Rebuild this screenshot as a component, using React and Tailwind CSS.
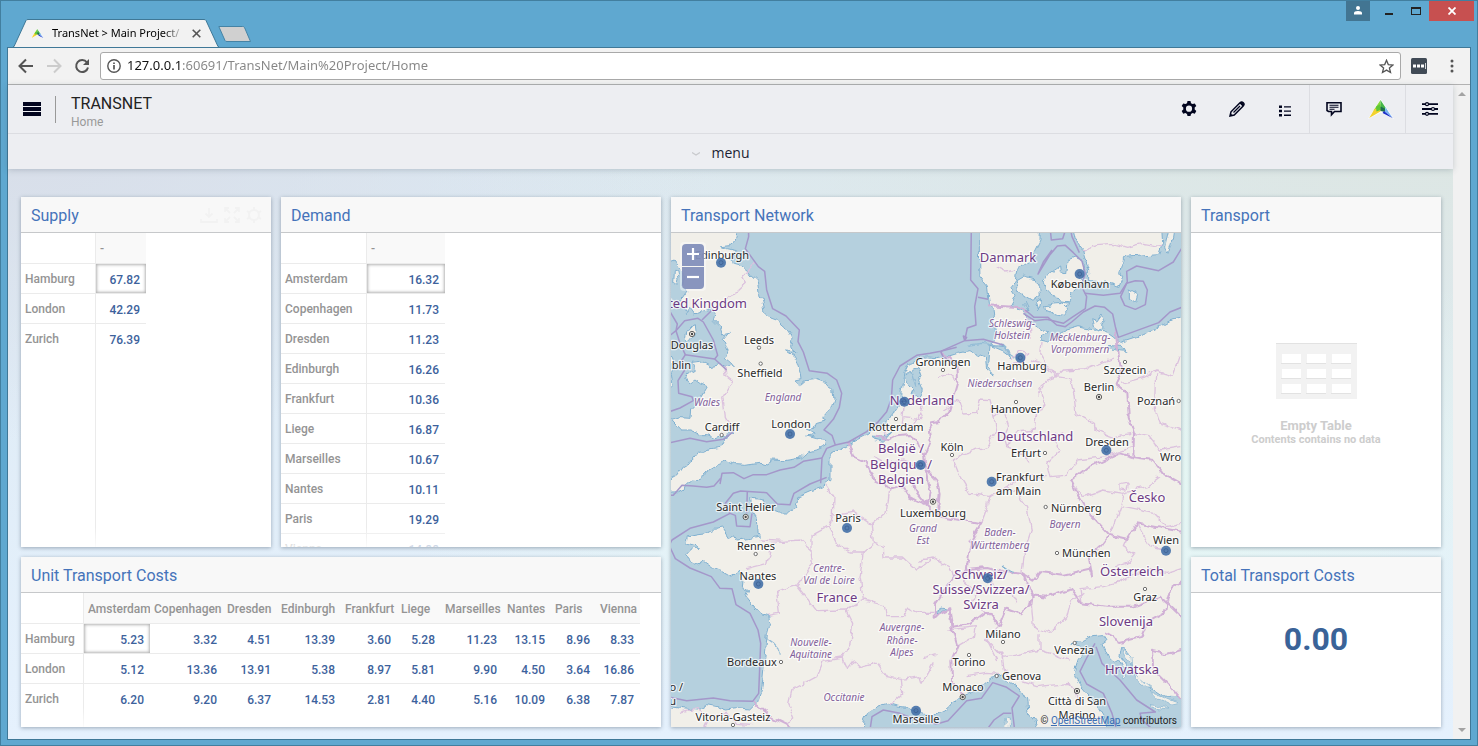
import clsx from 'clsx'

/* Transport dashboard inside a browser window. Panels sit on a 4 column grid,
 * the map is drawn at three units per pixel (see GEO_SCALE). */

const SUPPLY = [
  ['Hamburg', '67.82'],
  ['London', '42.29'],
  ['Zurich', '76.39'],
]

const DEMAND = [
  ['Amsterdam', '16.32'],
  ['Copenhagen', '11.73'],
  ['Dresden', '11.23'],
  ['Edinburgh', '16.26'],
  ['Frankfurt', '10.36'],
  ['Liege', '16.87'],
  ['Marseilles', '10.67'],
  ['Nantes', '10.11'],
  ['Paris', '19.29'],
  ['Vienna', '14.88'],
]

const COST_COLUMNS = [
  ['Amsterdam', 'w-[66px]'],
  ['Copenhagen', 'w-[73px]'],
  ['Dresden', 'w-[54px]'],
  ['Edinburgh', 'w-[64px]'],
  ['Frankfurt', 'w-[56px]'],
  ['Liege', 'w-[44px]'],
  ['Marseilles', 'w-[62px]'],
  ['Nantes', 'w-[48px]'],
  ['Paris', 'w-[45px]'],
  ['Vienna', 'w-[44px]'],
]

const COSTS = [
  ['Hamburg', '5.23', '3.32', '4.51', '13.39', '3.60', '5.28', '11.23', '13.15', '8.96', '8.33'],
  ['London', '5.12', '13.36', '13.91', '5.38', '8.97', '5.81', '9.90', '4.50', '3.64', '16.86'],
  ['Zurich', '6.20', '9.20', '6.37', '14.53', '2.81', '4.40', '5.16', '10.09', '6.38', '7.87'],
]

/* ---------- map data ---------- */

const GEO_SCALE = 'translate(-1 -3) scale(0.33333)'

const LAND = [
  // Great Britain
  'M-20 -20 L205 -20 205 9 198 30 180 44 150 48 172 56 200 62 186 78 178 88 196 100 215 105 232 118 240 135 262 155 268 190 278 225 282 245 300 262 322 270 345 290 360 312 366 330 362 345 378 372 368 362 346 360 372 378 384 400 394 430 396 446 372 450 390 465 405 452 440 448 470 458 488 478 492 505 482 535 458 562 470 570 440 578 432 598 408 600 436 612 410 618 440 626 470 628 466 648 440 660 410 668 390 685 345 692 300 690 288 705 270 700 230 706 200 704 170 690 148 700 130 715 102 732 88 752 70 750 50 760 45 775 20 785 -20 790 -20 760 20 738 40 708 70 690 90 664 120 660 150 655 160 634 190 608 160 618 135 626 110 614 90 614 60 600 35 600 12 576 5 568 30 560 60 562 62 540 88 512 112 470 92 462 75 450 60 460 46 440 76 424 66 400 96 396 122 410 150 404 165 412 192 408 178 395 162 385 174 362 162 330 178 310 155 315 148 290 130 272 136 246 128 236 100 242 76 252 62 232 50 250 34 240 28 215 48 186 38 172 42 140 26 112 10 90 -20 100 Z',
  'M10 128 L20 126 24 145 20 160 8 158 Z',
  // Isle of Man, Ireland
  'M76 284 L64 290 50 305 46 325 58 332 70 316 78 300 Z',
  'M-20 370 L6 380 14 400 4 430 8 470 -20 500 Z',
  // Funen, Zealand, Lolland and the smaller Danish islands
  'M1038 152 L1062 138 1092 146 1106 170 1108 196 1086 214 1060 198 1046 178 Z',
  'M1120 150 L1140 130 1172 108 1174 126 1190 132 1194 90 1216 80 1236 90 1242 120 1232 160 1206 190 1196 216 1160 210 1144 188 1130 176 Z',
  'M1124 228 L1150 222 1184 220 1198 236 1180 256 1150 250 1126 240 Z',
  'M1096 216 L1112 206 1104 240 Z',
  'M1176 216 L1196 220 1190 230 Z',
  'M1080 240 L1064 222 1068 216 Z',
  // Sweden, Oland, Bornholm
  'M1205 -20 L1216 30 1236 56 1246 90 1256 120 1256 156 1300 158 1345 172 1358 140 1352 124 1364 82 1412 78 1466 74 1478 40 1474 -20 Z',
  'M1500 -20 L1515 -20 1508 24 1494 70 1484 54 Z',
  'M1378 180 L1406 196 1400 216 1378 202 Z',
  // Rugen
  'M1262 266 L1280 274 1296 252 1304 268 1296 284 1308 296 1284 300 1268 290 Z',
  // Mainland
  'M928 -20 L928 60 930 140 952 168 958 220 972 236 974 258 960 276 982 300 978 326 955 345 1005 350 1022 380 998 362 960 346 956 408 975 438 950 420 946 384 920 374 900 362 860 370 828 380 800 386 770 384 740 388 715 404 702 430 694 480 690 520 662 566 630 592 600 606 594 612 540 640 480 672 480 754 456 772 420 782 388 796 374 820 384 834 360 846 326 846 290 832 278 806 242 802 246 840 262 862 264 912 272 918 236 926 200 930 190 914 176 922 158 894 130 898 102 912 84 914 52 920 48 942 78 950 90 958 66 958 50 976 62 992 88 1008 96 990 124 1010 156 1022 184 1038 204 1024 216 1050 214 1072 236 1082 228 1102 250 1130 276 1152 296 1156 300 1180 292 1210 290 1232 286 1272 282 1312 276 1370 262 1420 242 1440 200 1436 166 1440 140 1430 110 1424 80 1440 40 1436 -20 1426 -20 1520 1560 1520 1560 258 1500 272 1450 300 1412 318 1350 338 1330 318 1312 306 1268 300 1224 290 1190 300 1160 316 1136 336 1112 330 1130 306 1100 288 1074 274 1060 240 1020 226 1036 194 1020 170 1036 150 1040 126 1058 108 1080 94 1092 66 1110 30 1112 -20 Z',
]

const WATER = [
  // Mediterranean
  'M578 1520 L582 1470 592 1448 624 1428 652 1420 680 1428 716 1432 744 1448 784 1458 822 1440 850 1415 878 1400 910 1390 940 1362 965 1342 990 1336 1015 1354 1050 1376 1070 1410 1074 1448 1094 1474 1112 1520 Z',
  // Adriatic
  'M1222 1290 L1210 1326 1226 1362 1250 1390 1278 1424 1304 1466 1320 1520 1560 1520 1560 1430 1520 1400 1480 1398 1440 1372 1410 1350 1390 1320 1380 1270 1356 1250 1350 1280 1372 1310 1358 1314 1346 1290 1332 1298 1314 1280 1296 1240 1308 1232 1296 1214 1262 1218 1228 1236 1200 1244 1222 1252 1252 1262 Z',
  // IJsselmeer, Scheldt
  'M702 440 L726 420 746 412 756 440 748 452 760 480 748 500 726 494 732 480 716 464 Z',
  'M604 618 L640 622 668 604 640 634 610 628 Z',
  // Szczecin lagoon
  'M1320 346 L1360 350 1368 364 1350 362 1330 358 Z',
  // Lakes Geneva and Constance
  'M796 1148 L816 1134 840 1140 820 1142 802 1152 Z',
  'M996 1008 L1020 1024 1036 1028 1030 1034 1008 1022 Z',
]

const ISLETS = [
  'M1010 1468 L1018 1470 1018 1500 1006 1500 Z',
  'M1356 1252 L1386 1284 1388 1302 1370 1290 Z',
  'M1392 1330 L1420 1352 1446 1372 1426 1370 1400 1348 Z',
  'M1440 1384 L1480 1402 1520 1418 1500 1422 1460 1404 Z',
  'M1350 1322 L1366 1336 1360 1346 Z',
  'M1440 1424 L1490 1432 1500 1440 1450 1434 Z',
]

const RIVERS = [
  'M892 346 L930 340 1000 346 1022 372 1046 388',
  'M292 1226 L312 1240 324 1254 328 1274',
  'M690 480 L706 432 722 420 M722 420 L738 470',
]

const SEA_BORDERS = [
  'M235 -10 L236 20 226 56 265 110 284 124 290 180 308 236 348 258 388 300 384 335 400 366 418 422 472 430 500 450 515 490 508 532 490 568 462 600 486 616 496 645 470 655 456 684 452 760',
  'M150 762 L156 730 190 728 222 746 250 734 290 734 330 720 372 712 400 694 456 684',
  'M496 645 L536 636 590 605 622 578 650 545 664 506 668 450 690 408 740 376 780 370 812 364 860 352',
  'M904 -10 L902 150 924 176 914 230 918 285 892 294 884 332 M924 202 L954 208',
  'M812 364 L884 332 890 322 880 318 884 332 940 328 1000 345 M812 364 L820 382 860 402',
  'M1066 240 L1092 262 1134 262 1160 285 1186 290 1205 276 1240 246 1275 228 1304 232 1328 252 1336 290 1345 322 1400 302 1466 278 1500 246 1560 222',
  'M1060 250 L1094 272 1130 268 1180 280 1206 262 1246 236 1250 200 1234 168 1246 130 1236 94 1210 68 1186 46 1162 48 1140 74 1104 132 1120 96 1146 60',
  'M1244 190 L1300 196 1350 190 1372 156 1370 124 1400 108 1466 122 1510 96 1550 30',
  'M1370 160 L1396 152 1420 154 1432 180 1426 224 1396 238 1364 226 1352 200 Z',
  'M1140 -10 L1144 30 1178 26 1190 -10 M1200 -10 L1206 20 1228 68',
  'M-10 324 L18 302 22 282 -10 228 M18 302 L44 272 84 265 100 276 130 330 143 376 134 387 88 380 46 374 36 390 44 420 24 452 26 490 66 500 70 512 30 534 -10 548',
  'M18 302 L30 340 46 374 M96 270 L130 236 M134 387 L170 420',
  'M-10 640 L60 625 110 635 160 628 190 605',
  'M-10 795 L10 796 36 766 70 768 110 772 132 768 152 745',
  'M-10 960 L6 930 60 895 130 876 180 850 166 820 190 790 212 783 290 788 322 822 360 824 372 790 420 762 470 742',
  'M180 850 L196 856 200 888 240 890 246 850 M232 783 L230 850',
  'M-10 930 L4 960 16 986 60 1014 124 1040 150 1075 186 1076 198 1124 240 1150 264 1200 272 1240 266 1390 248 1414 180 1412 130 1404 50 1412 -10 1400',
  'M600 1500 L606 1460 640 1440 690 1450 740 1470 800 1482 834 1472 890 1412 934 1405 968 1358 1010 1372 1048 1398 1026 1434 1034 1500 M950 1500 L972 1470 1000 1450 1024 1450',
  'M1275 1240 L1250 1284 1230 1324 1250 1362 1300 1390 1326 1450 1340 1500',
  'M1278 1250 L1296 1300 1350 1350 1400 1410 1456 1446 1410 1450 1416 1470 1450 1500',
]

const NATIONAL = [
  'M536 636 L550 682 590 700 612 752 660 775 698 768 720 800 742 812 770 824 800 855 935 880 902 936 890 1020 852 1040 796 1120 794 1160 840 1138 844 1190 862 1250 844 1290 846 1350 878 1400',
  'M812 364 L862 402 864 450 838 540 812 576 780 580 786 620 762 680 770 720 796 748 806 790 800 855',
  'M612 620 L660 628 682 616 720 612 744 634 762 680 M728 752 L742 790 770 824 780 780 770 720',
  'M888 1020 L952 1014 1010 1030 1060 1034 1090 1052 1110 1026 1180 1034 1258 1016 1266 1034 1256 980 1290 950 1318 914 1370 926 1400 880 1534 905',
  'M1318 914 L1250 840 1220 790 1204 752 1250 716 1350 670 1390 682 1450 690 1480 730 1534 760',
  'M1334 290 L1350 400 1356 430 1340 464 1372 490 1376 560 1392 610 1390 682',
  'M794 1160 L840 1134 850 1190 900 1182 950 1144 988 1188 1010 1136 1048 1150 1084 1122 1088 1092 1060 1034',
  'M1084 1096 L1130 1100 1200 1075 1236 1120 1310 1130 1390 1130 1470 1100 1490 1118 1500 1080 1534 1054 M1490 1118 L1534 1160',
  'M1304 1210 L1350 1236 1414 1220 1430 1180 1484 1150 1490 1118',
  'M1534 1412 L1500 1370 1450 1320 1446 1262 1490 1272 1534 1260',
  'M248 1414 L300 1460 350 1484 372 1500',
  'M954 226 L1060 232 1074 246',
]

const REGIONAL = [
  'M255 98 L215 140 226 160 172 210',
  'M165 412 L168 436 186 450 158 500 166 560 190 602',
  'M272 930 L340 934 390 930 426 960 430 1000 380 1066 320 1084 328 1150 296 1156 M228 1016 L290 1000 300 960',
  'M470 768 L492 800 490 852 474 890 426 916 426 960 M474 890 L500 940 540 966 580 966 606 944 M480 860 L550 846 604 884 610 940 640 950 642 984 700 984 740 1020 784 990',
  'M660 775 L648 850 606 884 M580 966 L570 1040 580 1110 528 1140 440 1142 380 1066',
  'M580 1110 L640 1126 646 1160 700 1160 716 1134 750 1150 790 1150 M528 1140 L548 1180 540 1240 516 1284 460 1294 440 1340 366 1380 356 1420 372 1460 350 1484',
  'M516 1284 L530 1316 550 1290 570 1310 620 1296 650 1340 694 1348 698 1390 660 1424 M694 1348 L750 1340 756 1360 790 1300',
  'M750 990 L790 984 840 1014 852 1040 M760 1286 L800 1274',
  'M804 440 L830 430 858 446 M700 520 L694 580 726 590 748 550 756 566 700 560 M748 550 L756 510 780 500 M640 592 L650 620 M612 680 L650 700 700 690 730 700',
  'M870 740 L850 690 880 670 950 650 980 600 972 560 960 512 930 510 920 550 880 552 870 510 820 540',
  'M972 560 L1000 540 1016 590 1002 620 1010 650 1060 670 1080 700 M1108 470 L1130 450 1160 440 1200 446 1212 490 1218 550 1270 580 1272 600',
  'M1108 470 L1126 520 1100 560 1096 600 1040 606 1010 650 M1116 336 L1112 370 1136 410 1160 440 1110 400 1080 390',
  'M1160 440 L1180 420 1250 416 1330 384 M1180 608 L1150 620 1170 660 1130 700 1140 740 1190 736 1220 690 1310 680 1392 650',
  'M1272 596 L1330 620 1384 610 M1022 386 L1050 364 1070 370 1060 400 1026 402',
  'M1356 460 L1430 440 1456 420 1510 436 1530 380 M1460 430 L1456 540 1470 580 1534 600 M1392 610 L1440 620 1470 660 1534 650',
  'M870 740 L900 790 960 800 1010 770 1040 790 1070 830 1084 900 1064 960 1056 1030 M960 800 L946 850 935 880 M1010 770 L1060 740 1130 740',
  'M1070 250 L1084 330 M1100 500 L1120 466 M1200 752 L1240 800 1300 780 1360 790 1350 830 1320 914 M1360 790 L1430 770 1470 740 M1350 830 L1450 850 1490 890 1534 880',
  'M1370 926 L1360 950 1394 970 1370 1000 1340 1010 1380 1040 1440 1016 1490 1030 1534 1016 M1236 1120 L1230 1076 1300 1070 1340 1060 1380 1040 M1400 880 L1440 950 1480 960',
  'M1084 1122 L1090 1190 1140 1210 1190 1160 1200 1120 1240 1090 M1110 1210 L1110 1260 1000 1282 950 1230 984 1190 M1110 1260 L1200 1290 M1000 1282 L1010 1340 1100 1370 1200 1360 1230 1420',
  'M838 1200 L916 1190 910 1220 860 1250 M950 1230 L980 1290 M890 1340 L950 1330 990 1334 M880 1050 L920 1090 900 1130 950 1144 M960 1040 L980 1090 1020 1080 1040 1120',
  'M1236 60 L1280 44 1330 40 1370 52 1420 40 1474 50 M980 110 L1010 126 1034 120',
  'M30 1450 L80 1436 120 1460 170 1450 200 1480 250 1484 M120 1460 L100 1500',
  'M1350 760 L1372 756 1368 780 1350 776 Z',
]

const PINS = [
  [153, 98], [360, 612], [703, 515], [752, 705], [1229, 132], [1051, 383], [1309, 661],
  [965, 755], [953, 1045], [1488, 962], [531, 894], [265, 1062], [738, 1442],
]

const TOWNS = [
  [267, 353], [272, 401], [155, 615], [678, 567], [819, 420], [1038, 516], [1125, 669],
  [846, 675], [1365, 396], [1526, 513], [1127, 831], [1161, 969], [1425, 1077], [999, 1236],
  [897, 1275], [980, 1338], [1214, 1239], [257, 972], [333, 1296], [189, 1485],
]

const CAPITALS = [
  [66, 312], [1287, 501], [789, 815], [1221, 1383], [878, 1401], [227, 861],
]

// name, x, baseline, anchor
const CITY_LABELS = [
  ['Edinburgh', 51, 26], ['Leeds', 88, 111], ['Sheffield', 89, 144], ['London', 120, 195],
  ['Cardiff', 51, 198], ['Douglas', 21, 116], ['Dublin', 20, 136, 'end'], ['Rotterdam', 225, 198],
  ['Groningen', 272, 133], ['København', 409, 55], ['Hamburg', 351, 137], ['Szczecin', 454, 141],
  ['Berlin', 428, 158], ['Poznań', 466, 172, 'start'], ['Hannover', 345, 180], ['Dresden', 436, 213],
  ['Köln', 281, 218], ['Erfurt', 355, 224], ['Wrocław', 489, 228, 'start'],
  ['Frankfurt', 325, 248, 'start'], ['am Main', 325, 262, 'start'], ['Nürnberg', 380, 279, 'start'],
  ['Luxembourg', 262, 284], ['München', 391, 324, 'start'], ['Wien', 495, 311], ['Graz', 474, 368],
  ['Milano', 332, 405], ['Torino', 298, 433], ['Genova', 331, 447, 'start'], ['Monaco', 292, 458],
  ['Venezia', 403, 421], ['Città di San', 406, 472], ['Marino', 406, 486], ['Marseille', 245, 490],
  ['Saint Helier', 75, 278], ['Rennes', 85, 317], ['Nantes', 87, 347], ['Paris', 177, 289],
  ['Bordeaux', 81, 433], ['Vitoria-Gasteiz', 62, 488], ['Bilbao /', 12, 458, 'end'], ['Bilbou', 5, 472, 'end'],
]

const COUNTRY_LABELS = [
  ['United Kingdom', 76, 75, 'end'], ['Nederland', 251, 172], ['België /', 230, 220], ['Belgique /', 230, 236],
  ['Belgien', 230, 251], ['Danmark', 337, 29], ['Deutschland', 364, 208], ['Česko', 476, 269],
  ['Österreich', 461, 343], ['Schweiz/', 310, 346], ['Suisse/Svizzera/', 310, 361], ['Svizra', 310, 376],
  ['Slovenija', 455, 393], ['Hrvatska', 461, 441], ['France', 166, 369],
]

const REGION_LABELS = [
  ['Wales', 36, 173], ['England', 112, 168], ['Schleswig-', 341, 94], ['Holstein', 341, 106],
  ['Mecklenburg-', 409, 108], ['Vorpommern', 409, 120], ['Niedersachsen', 329, 154], ['Bayern', 394, 295],
  ['Grand', 252, 299], ['Est', 252, 311], ['Baden-', 329, 303], ['Württemberg', 329, 316],
  ['Centre-', 158, 339], ['Val de Loire', 158, 351], ['Auvergne-', 231, 398], ['Rhône-', 231, 411],
  ['Alpes', 231, 423], ['Nouvelle-', 140, 413], ['Aquitaine', 140, 425], ['Occitanie', 173, 468],
]

function Labels({ items, className }) {
  return (
    <g className={className} stroke="#fff" strokeOpacity="0.7" strokeWidth="2.5" strokeLinejoin="round" paintOrder="stroke">
      {items.map(([name, x, y, anchor = 'middle']) => (
        <text key={name + y} x={x} y={y} textAnchor={anchor}>
          {name}
        </text>
      ))}
    </g>
  )
}

function NetworkMap() {
  return (
    <div className="relative min-h-0 flex-1 overflow-hidden bg-[#b5d0de]">
      <svg
        className="absolute inset-0 h-full w-full"
        viewBox="0 0 510 494"
        preserveAspectRatio="xMinYMin slice"
        role="img"
        aria-label="Transport network"
      >
        <defs>
          <filter id="rough" x="-5%" y="-5%" width="110%" height="110%" colorInterpolationFilters="sRGB">
            <feTurbulence type="fractalNoise" baseFrequency="0.11" numOctaves="2" seed="4" />
            <feDisplacementMap in="SourceGraphic" scale="7" xChannelSelector="R" yChannelSelector="G" />
          </filter>
        </defs>
        <g filter="url(#rough)">
          <g transform={GEO_SCALE} strokeLinejoin="round">
            <g fill="#f1efe9" stroke="#7fb0d0" strokeWidth="3">
              {LAND.map((d) => <path key={d} d={d} />)}
            </g>
            <g fill="#b5d0de" stroke="#7fb0d0" strokeWidth="3">
              {WATER.map((d) => <path key={d} d={d} />)}
            </g>
            <g fill="#f1efe9" stroke="#7fb0d0" strokeWidth="2">
              {ISLETS.map((d) => <path key={d} d={d} />)}
            </g>
            <g fill="none" stroke="#94bcd6" strokeWidth="4">
              {RIVERS.map((d) => <path key={d} d={d} />)}
            </g>
            <g fill="none" stroke="#dcc2de" strokeWidth="4">
              {REGIONAL.map((d) => <path key={d} d={d} />)}
            </g>
            <g fill="none" stroke="#d0b0d6" strokeWidth="6">
              {NATIONAL.map((d) => <path key={d} d={d} />)}
            </g>
          </g>
        </g>
        <g transform={GEO_SCALE}>
          <g fill="none" stroke="#a497ca" strokeWidth="4.5" strokeLinejoin="round">
            {SEA_BORDERS.map((d) => <path key={d} d={d} />)}
          </g>
          <g fill="#fff" stroke="#555" strokeWidth="2.5">
            {TOWNS.map(([x, y]) => <circle key={`${x}-${y}`} cx={x} cy={y} r="5" />)}
          </g>
          {CAPITALS.map(([x, y]) => (
            <g key={`${x}-${y}`}>
              <circle cx={x} cy={y} r="8" fill="#f1efe9" stroke="#444" strokeWidth="2.5" />
              <circle cx={x} cy={y} r="3.5" fill="#444" />
            </g>
          ))}
        </g>
        <Labels items={REGION_LABELS} className="fill-[#83619a] font-['Noto_Sans',sans-serif] text-[10px] italic" />
        <Labels items={COUNTRY_LABELS} className="fill-[#6d3a84] font-['Noto_Sans',sans-serif] text-[13px]" />
        <Labels items={CITY_LABELS} className="fill-[#2a2a2a] font-['Noto_Sans',sans-serif] text-[11px]" />
        <g transform={GEO_SCALE}>
          {PINS.map(([x, y]) => (
            <g key={`${x}-${y}`} fillOpacity="0.9">
              <circle cx={x} cy={y} r="15" fill="#4470a8" />
              <circle cx={x} cy={y} r="6" fill="none" stroke="#3a5c8e" strokeWidth="2" />
            </g>
          ))}
        </g>
      </svg>

      <div className="absolute left-[9px] top-[9px] flex flex-col gap-px rounded bg-white/40 p-[2px]">
        <ZoomButton label="Zoom in" className="rounded-t-sm">
          <path d="M5 10h12M11 4v12" />
        </ZoomButton>
        <ZoomButton label="Zoom out" className="rounded-b-sm">
          <path d="M5 10h12" />
        </ZoomButton>
      </div>

      <p className="absolute bottom-0 right-1 font-[Roboto,sans-serif] text-[10px] leading-3 text-[#222]">
        © <a href="#osm" className="text-[#3c6eb4] underline">OpenStreetMap</a> contributors
      </p>
    </div>
  )
}

function ZoomButton({ label, className, children }) {
  return (
    <button type="button" aria-label={label} className={clsx('h-[22px] w-[22px] bg-[#7d8bb8]/90', className)}>
      <svg viewBox="0 0 22 22" fill="none" stroke="#fff" strokeWidth="2.2" className="h-full w-full">{children}</svg>
    </button>
  )
}

/* ---------- window chrome ---------- */

function Logo({ className }) {
  return (
    <svg viewBox="0 0 26 20" className={className} aria-hidden="true">
      <path d="M12.5 0 L26 20 12.5 13.5 0 20 Z" fill="#fff" />
      <path d="M12.5 1 L5.5 11.500 12.5 11.500 Z" fill="#86d93c" />
      <path d="M12.5 1 L19.500 11.500 12.5 11.500 Z" fill="#45b548" />
      <path d="M6.500 10 L12.5 9 12.5 12.500 1.200 19 Z" fill="#f3d22e" />
      <path d="M8 7.800 L12.5 5 12.5 11 8.500 12.500 Z" fill="#5fc636" />
      <path d="M12.5 7.500 L18 10 17 13 12.500 12 Z" fill="#1f6f4c" />
      <path d="M17 7.800 L20.500 13 17 12.500 Z" fill="#9ad6f5" />
      <path d="M18 9.500 L24.800 19 16.500 12.500 Z" fill="#7ab2f2" />
      <path d="M16 12 L24.800 19.200 14.500 14 Z" fill="#1b2ec8" />
    </svg>
  )
}

function TitleBar() {
  return (
    <div className="flex h-[46px] items-start justify-between">
      <div className="flex self-end pl-[6px]">
        <div className="relative flex h-[28px] w-[206px] items-center pl-[18px]">
          <svg viewBox="0 0 206 28" preserveAspectRatio="none" className="absolute inset-0 h-full w-full" aria-hidden="true">
            <path d="M0 28 L1 27.5 13 1.5 Q13.5 .5 15 .5 H191 Q192.500 .5 193 1.500 L205 27.5 206 28 Z" fill="#f2f2f2" stroke="#3f7897" />
            <path d="M1.500 28 H204.500" stroke="#f2f2f2" strokeWidth="2" />
          </svg>
          <Logo className="relative h-[11px] w-[13px]" />
          <span className="relative ml-2 w-[132px] overflow-hidden whitespace-nowrap font-['Noto_Sans',sans-serif] text-[11px] leading-4 mask-r-from-85% mask-r-to-100%">
            TransNet &gt; Main Project/
          </span>
          <button type="button" aria-label="Close tab" className="relative ml-2">
            <svg viewBox="0 0 9 9" className="h-[9px] w-[9px]" stroke="#555" strokeWidth="1.6"><path d="M.7.7 8.300 8.300M8.300.7.7 8.300" /></svg>
          </button>
        </div>
        <button type="button" aria-label="New tab" className="-ml-px mt-[6px] h-[18px]">
          <svg viewBox="0 0 34 18" className="h-[18px] w-[34px]"><path d="M.8 1.500 H24.500 Q26 1.500 26.500 2.500 L32.500 16.500 H9 Q7.500 16.500 7 15.500 Z" fill="#d0d0d0" stroke="#4583a5" /></svg>
        </button>
      </div>

      <div className="-mr-[3px] flex">
        <button type="button" aria-label="Profile" className="flex h-5 w-6 items-center justify-center bg-[#427592]">
          <svg viewBox="0 0 8 9" className="mb-[2px] h-[9px] w-[8px]" fill="#fff"><circle cx="4" cy="2" r="2" /><path d="M0 8.500V7Q0 5 4 5T8 7V8.500Z" /></svg>
        </button>
        <button type="button" aria-label="Minimize" className="ml-[5px] flex h-5 w-[27px] items-end justify-center pb-[6px]">
          <span className="h-[2px] w-2 bg-[#222]" />
        </button>
        <button type="button" aria-label="Maximize" className="flex h-5 w-[27px] items-center justify-center">
          <span className="h-2 w-[10px] border border-t-2 border-[#222]" />
        </button>
        <button type="button" aria-label="Close" className="flex h-5 w-[45px] items-center justify-center bg-[#c75050]">
          <svg viewBox="0 0 8 8" className="h-2 w-2" stroke="#fff" strokeWidth="1.8"><path d="M.5.5 7.500 7.500M7.500.5.5 7.500" /></svg>
        </button>
      </div>
    </div>
  )
}

function AddressBar() {
  return (
    <div className="flex h-[37px] shrink-0 items-center border-b border-[#b2b2b2] bg-[#f2f2f2] pl-[10px] pr-4">
      <button type="button" aria-label="Back">
        <svg viewBox="0 0 16 16" className="h-4 w-4" fill="none" stroke="#555" strokeWidth="2"><path d="M15 8H2M8 1.500 1.500 8 8 14.500" /></svg>
      </button>
      <button type="button" aria-label="Forward" className="ml-3">
        <svg viewBox="0 0 16 16" className="h-4 w-4" fill="none" stroke="#ccc" strokeWidth="2"><path d="M1 8H14M8 1.500 14.500 8 8 14.500" /></svg>
      </button>
      <button type="button" aria-label="Reload" className="ml-3">
        <svg viewBox="0 0 16 16" className="h-4 w-4" fill="none" stroke="#555" strokeWidth="2"><path d="M13 4.500A6 6 0 1 0 14 9.500" /><path d="M15 1V7H9Z" fill="#555" stroke="none" /></svg>
      </button>
      <div className="ml-[10px] flex h-7 min-w-0 flex-1 items-center rounded-[3px] border border-[#a9a9a9] bg-white px-[6px]">
        <svg viewBox="0 0 14 14" className="h-[14px] w-[14px]" fill="none" stroke="#555" strokeWidth="1.400" aria-hidden="true">
          <circle cx="7" cy="7" r="6.200" /><path d="M7 6V10.500M7 3.500V5" strokeWidth="1.700" />
        </svg>
        <input
          aria-label="Address"
          defaultValue="127.0.0.1:60691/TransNet/Main%20Project/Home"
          className="ml-[6px] min-w-0 flex-1 bg-[linear-gradient(90deg,#111_54px,#858585_54px)] bg-clip-text font-['Noto_Sans',sans-serif] text-[13px] text-transparent outline-none"
        />
        <button type="button" aria-label="Bookmark">
          <svg viewBox="0 0 15 15" className="h-[15px] w-[15px]" fill="none" stroke="#555" strokeWidth="1.300"><path d="M7.500 1.300 9.300 5.600 13.900 6 10.400 9 11.500 13.500 7.500 11.100 3.500 13.500 4.600 9 1.100 6 5.700 5.600Z" /></svg>
        </button>
      </div>
      <button type="button" aria-label="Extension" className="ml-[10px]">
        <svg viewBox="0 0 16 16" className="h-4 w-4"><rect width="16" height="16" rx="1.500" fill="#414b56" /><path d="M2 6.500h3v3h-3zM6 6.500h3v3h-3zM10 6.500h3v3h-3zM14 5h.8v6h-.8z" fill="#fff" /></svg>
      </button>
      <button type="button" aria-label="Browser menu" className="ml-[23px]">
        <svg viewBox="0 0 4 14" className="h-[14px] w-1" fill="#555"><circle cx="2" cy="2" r="1.500" /><circle cx="2" cy="7" r="1.500" /><circle cx="2" cy="12" r="1.500" /></svg>
      </button>
    </div>
  )
}

function HeaderButton({ label, divided, children }) {
  return (
    <button
      type="button"
      aria-label={label}
      className={clsx('flex w-12 items-center justify-center border-[#dcdde2]', divided && 'border-l')}
    >
      {children}
    </button>
  )
}

function AppHeader() {
  return (
    <header className="relative z-10 bg-[#edeef2] shadow-[0_1px_6px_rgba(60,80,90,0.25)]">
      <div className="flex h-[49px] justify-between border-b border-[#dcdde2]">
        <div className="flex items-center">
          <button type="button" aria-label="Pages" className="ml-[15px] flex w-[18px] flex-col gap-px">
            <span className="h-1 w-full bg-[#02051f]" />
            <span className="h-1 w-full bg-[#02051f]" />
            <span className="h-1 w-full bg-[#02051f]" />
          </button>
          <div className="ml-[14px] h-[27px] w-px bg-[#999]" />
          <div className="ml-[15px] pt-[5px]">
            <h1 className="text-[16px] leading-5 text-[#222]">TRANSNET</h1>
            <p className="text-[12px] leading-4 text-[#999]">Home</p>
          </div>
        </div>
        <nav className="flex text-[#02051f]">
          <HeaderButton label="Settings">
            <svg viewBox="0 0 16 16" className="h-4 w-4" fill="currentColor" fillRule="evenodd"><path d="M6.500 0h3l.5 2.200 1.600.9 2.200-.7 1.500 2.600-1.600 1.600v2l1.600 1.500-1.500 2.600-2.200-.7-1.600.9-.5 2.100h-3l-.5-2.100-1.600-.9-2.200.7L.7 10.100l1.600-1.500v-2L.7 5l1.500-2.600 2.200.7 1.600-.9ZM8 4.600a3.100 3.100 0 1 0 0 6.200 3.100 3.100 0 0 0 0-6.200Z" /></svg>
          </HeaderButton>
          <HeaderButton label="Edit">
            <svg viewBox="0 0 16 16" className="h-4 w-4" fill="none" stroke="currentColor" strokeWidth="1.500"><path d="M1 15 2 10.800 11 1.800Q12.700.2 14.300 1.700 15.800 3.300 14.200 5L5.200 14Z" /><path d="M4.500 11.500 11 5" strokeWidth="1.200" /><path d="M10.500 2.300 12.500.8 15.200 3.500 13.700 5.500Z M1 15 1.600 12.300 3.700 14.400Z" fill="currentColor" stroke="none" /></svg>
          </HeaderButton>
          <HeaderButton label="List">
            <svg viewBox="0 0 12 12" className="mt-[3px] h-3 w-3" fill="currentColor"><path d="M0 .5h3v2.600H0zM0 4.700h3v2.600H0zM0 8.900h3v2.600H0zM5 1.200h7v1.300H5zM5 5.400h7v1.300H5zM5 9.600h7v1.300H5z" /></svg>
          </HeaderButton>
          <HeaderButton label="Comments" divided>
            <svg viewBox="0 0 16 16" className="h-4 w-4" fill="none" stroke="currentColor" strokeWidth="1.600"><path d="M1 1.800H15V10.500H8.500L5.500 13.800V10.500H2.500L1 9.500Z" /><path d="M3.500 4.200h9M3.500 6.200h9M3.500 8.200h5" strokeWidth="1.100" /></svg>
          </HeaderButton>
          <HeaderButton label="AIMMS">
            <Logo className="h-5 w-[26px]" />
          </HeaderButton>
          <HeaderButton label="Filters" divided>
            <svg viewBox="0 0 16 14" className="h-[14px] w-4" fill="#edeef2" stroke="currentColor" strokeWidth="1.800"><path d="M0 2.200H16M0 7H16M0 11.800H16" /><circle cx="5" cy="2.200" r="1.500" strokeWidth="1.200" /><circle cx="11" cy="7" r="1.500" strokeWidth="1.200" /><circle cx="5" cy="11.800" r="1.500" strokeWidth="1.200" /></svg>
          </HeaderButton>
        </nav>
      </div>
      <div className="flex h-[35px] items-center justify-center pt-[2px]">
        <button type="button" className="relative font-['Open_Sans',sans-serif] text-[14px] leading-5 text-[#1c1f33]">
          <svg viewBox="0 0 8 4" className="absolute -left-5 top-[9px] h-1 w-2" fill="none" stroke="#c9cace" strokeWidth="1.300"><path d="M0 .5 4 3 8 .5" /></svg>
          menu
        </button>
      </div>
    </header>
  )
}

/* ---------- panels ---------- */

function Panel({ title, className, actions, children }) {
  return (
    <section className={clsx('flex min-h-0 min-w-0 flex-col overflow-hidden bg-white shadow-[0_1px_4px_rgba(40,60,80,0.4)]', className)}>
      <div className="flex h-9 shrink-0 items-center justify-between border-b border-[#c6c8ca] bg-[#f8f8f8] pl-[10px] pr-[9px]">
        <h2 className="pt-[2px] text-[16px] leading-5 text-[#4573ba]">{title}</h2>
        {actions}
      </div>
      {children}
    </section>
  )
}

function PanelActions() {
  return (
    <div className="flex items-center gap-[6px] text-[#f2f2f2]">
      <svg viewBox="0 0 18 16" className="h-4 w-[18px]" fill="none" stroke="currentColor" strokeWidth="1.800"><path d="M9 1v8M5.500 6.500 9 10l3.500-3.500M1 12v3h16v-3" /></svg>
      <svg viewBox="0 0 16 16" className="h-4 w-4" fill="none" stroke="currentColor" strokeWidth="1.800"><path d="M1 5V1h4M11 1h4v4M15 11v4h-4M5 15H1v-4M1 1l5 5M15 1l-5 5M15 15l-5-5M1 15l5-5" /></svg>
      <svg viewBox="0 0 16 16" className="h-4 w-4" fill="none" stroke="currentColor" strokeWidth="2"><circle cx="8" cy="8" r="5" /><path d="M8 0v3M8 13v3M1 4l3 2M12 10l3 2M1 12l3-2M12 6l3-2" /></svg>
    </div>
  )
}

function DataTable({ caption, labelWidth, columns, rows, fill }) {
  return (
    <div className="relative min-h-0 flex-1 overflow-hidden">
      {/* w-px makes the fixed layout take its width from the columns */}
      <table aria-label={caption} className="h-full w-px table-fixed border-separate border-spacing-0 whitespace-nowrap text-[12px] font-medium leading-4">
        <thead>
          <tr className="h-[31px]">
            <td className={clsx('border-b border-r border-[#ebebeb] p-0', labelWidth)} />
            {columns.map(([name, width]) => (
              <th key={name} scope="col" className={clsx('overflow-hidden border-b border-[#ebebeb] bg-[#f9f9f9] p-0 pl-1 pt-[2px] text-left font-medium text-[#949494]', width)}>
                {name}
              </th>
            ))}
          </tr>
        </thead>
        <tbody>
          {rows.map(([name, ...values], r) => (
            <tr key={name} className={clsx('h-[30px]', r < rows.length - 1 && '*:border-b')}>
              <th scope="row" className="border-r border-[#ebebeb] p-0 pl-1 text-left font-medium text-[#949494]">{name}</th>
              {values.map((value, c) => (
                <td
                  key={columns[c][0]}
                  className={clsx(
                    'border-[#ebebeb] p-0 pr-[6px] pt-[2px] text-right text-[#3d629c]',
                    r === 0 && c === 0 && 'shadow-[inset_0_0_3px_1px_rgba(0,0,0,0.3)]',
                  )}
                >
                  {value}
                </td>
              ))}
            </tr>
          ))}
          {fill && (
            <tr aria-hidden="true">
              <td className="border-r border-[#ebebeb] p-0" />
            </tr>
          )}
        </tbody>
      </table>
      <div className="pointer-events-none absolute inset-x-0 bottom-0 h-5 bg-linear-to-b from-white/0 to-white/80" />
    </div>
  )
}

function EmptyTable() {
  return (
    <div className="flex flex-1 flex-col items-center justify-center pt-2 font-bold text-[#cdcdcd]">
      <svg viewBox="0 0 81 56" className="h-14 w-[81px]" aria-hidden="true">
        <rect width="81" height="56" fill="#f2f2f2" />
        <rect width="81" height="1" fill="#e2e2e2" />
        {[11, 26, 41].map((y) =>
          [6, 31, 56].map((x) => (
            <g key={`${x}-${y}`}>
              <rect x={x} y={y} width="19" height="9" fill="#fff" />
              <rect x={x - 1} y={y + 9} width="20" height="1" fill="#e2e2e2" />
            </g>
          )),
        )}
      </svg>
      <p className="mt-[19px] text-[13px] leading-4">Empty Table</p>
      <p className="text-[11px] leading-3">Contents contains no data</p>
    </div>
  )
}

export default function App() {
  return (
    <div className="flex h-screen min-h-[560px] flex-col border border-[#427f9f] bg-[#5fa8d0] px-[6px] pb-[5px] font-[Roboto,sans-serif]">
      <TitleBar />
      <div className="flex min-h-0 flex-1 flex-col border border-[#3f7897]">
        <AddressBar />
        <div className="flex min-h-0 flex-1">
          <div className="flex min-w-0 flex-1 flex-col bg-[radial-gradient(ellipse_at_72%_62%,rgba(232,250,243,0.9),transparent_45%),radial-gradient(ellipse_at_100%_0%,rgba(221,230,225,1),transparent_50%),radial-gradient(ellipse_at_0%_10%,rgba(216,222,233,1),transparent_35%),linear-gradient(180deg,#dbe8f1,#e5f1fd)]">
            <AppHeader />
            <main className="grid min-h-0 flex-1 grid-cols-[25fr_38fr_51fr_25fr] grid-rows-[35fr_17fr] gap-[10px] pb-3 pl-[13px] pr-3 pt-7">
              <Panel title="Supply" actions={<PanelActions />}>
                <DataTable caption="Supply" labelWidth="w-[75px]" columns={[['-', 'w-[50px]']]} rows={SUPPLY} fill />
              </Panel>
              <Panel title="Demand">
                <DataTable caption="Demand" labelWidth="w-[86px]" columns={[['-', 'w-[78px]']]} rows={DEMAND} />
              </Panel>
              <Panel title="Transport Network" className="row-span-2">
                <NetworkMap />
              </Panel>
              <Panel title="Transport">
                <EmptyTable />
              </Panel>
              <Panel title="Unit Transport Costs" className="col-span-2">
                <DataTable caption="Unit Transport Costs" labelWidth="w-[63px]" columns={COST_COLUMNS} rows={COSTS} fill />
              </Panel>
              <Panel title="Total Transport Costs">
                <p className="pt-[26px] text-center text-[32px] font-bold leading-10 text-[#3a6398]">0.00</p>
              </Panel>
            </main>
          </div>
          <div className="flex w-[17px] flex-col items-center justify-between bg-[#f1f1f1] py-[7px]" aria-hidden="true">
            <svg viewBox="0 0 8 4" className="h-1 w-2" fill="#a3a3a3"><path d="M0 4 4 0 8 4Z" /></svg>
            <svg viewBox="0 0 8 4" className="h-1 w-2" fill="#a3a3a3"><path d="M0 0 4 4 8 0Z" /></svg>
          </div>
        </div>
      </div>
    </div>
  )
}
